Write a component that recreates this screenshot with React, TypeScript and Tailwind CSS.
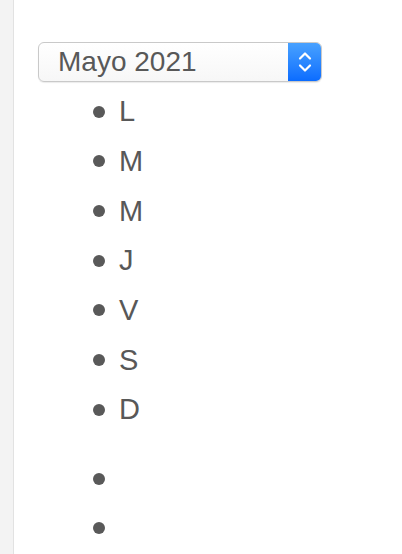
const days = ["L", "M", "M", "J", "V", "S", "D"];

const Bullet = () => (
  <span className="block h-[12px] w-[12px] rounded-full bg-[#595959]" />
);

export default function App() {
  return (
    <div
      className="flex min-h-[554px] bg-white text-[#585858]"
      style={{ fontFamily: '"Liberation Sans", Arial, sans-serif' }}
    >
      <div className="w-[14px] shrink-0 border-r border-[#e2e2e2] bg-[#f3f3f3]" />

      <div className="flex-1 pl-[24px] pt-[42px]">
        <div className="flex h-[40px] w-[284px] overflow-hidden rounded-[6px] border border-[#c9c9c9] bg-gradient-to-b from-white to-[#f7f7f7] shadow-[0_1px_1px_rgba(0,0,0,0.08)]">
          <div className="flex flex-1 items-center pl-[19px] text-[28px] leading-none">
            Mayo 2021
          </div>
          <div className="flex w-[33px] items-center justify-center bg-gradient-to-b from-[#48a1ff] to-[#0a6cff]">
            <svg width="16" height="26" viewBox="0 0 16 26" fill="none">
              <path
                d="M3 9.5 L8 4.5 L13 9.5"
                stroke="white"
                strokeWidth="2.2"
                strokeLinecap="round"
                strokeLinejoin="round"
              />
              <path
                d="M3 16.5 L8 21.5 L13 16.5"
                stroke="white"
                strokeWidth="2.2"
                strokeLinecap="round"
                strokeLinejoin="round"
              />
            </svg>
          </div>
        </div>

        <ul className="mt-[5px]">
          {days.map((d, i) => (
            <li key={i} className="flex h-[49.67px] items-center">
              <span className="ml-[55px] mr-[14px]">
                <Bullet />
              </span>
              <span className="text-[29px] leading-none">{d}</span>
            </li>
          ))}
        </ul>

        <ul className="mt-[20px]">
          {[0, 1].map((i) => (
            <li key={i} className="flex h-[49px] items-center">
              <span className="ml-[55px]">
                <Bullet />
              </span>
            </li>
          ))}
        </ul>
      </div>
    </div>
  );
}
